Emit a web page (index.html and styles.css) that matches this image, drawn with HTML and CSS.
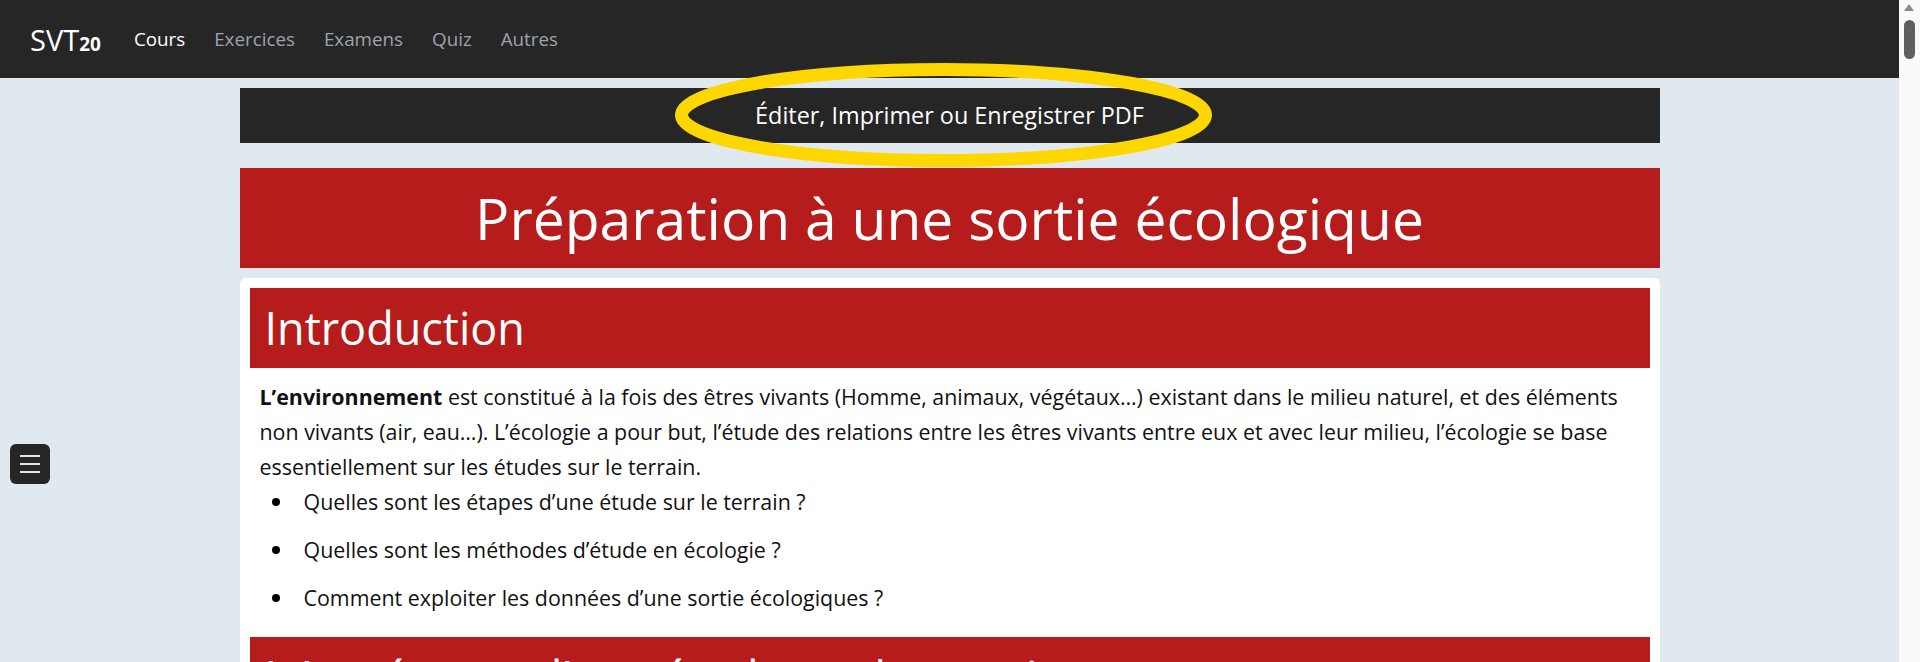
FILE: index.html
```html
<!DOCTYPE html>
<html lang="fr">
<head>
<meta charset="utf-8">
<title>Préparation à une sortie écologique</title>
<link rel="stylesheet" href="styles.css">
</head>
<body>
<div class="viewport">
  <nav class="topbar">
    <a class="brand">SVT<sub>20</sub></a>
    <ul class="navlinks">
      <li><a class="active">Cours</a></li>
      <li><a>Exercices</a></li>
      <li><a>Examens</a></li>
      <li><a>Quiz</a></li>
      <li><a>Autres</a></li>
    </ul>
  </nav>
  <main class="container">
    <div class="editbar">Éditer, Imprimer ou Enregistrer PDF</div>
    <h1 class="title">Préparation à une sortie écologique</h1>
    <section class="card">
      <h2 class="sec-head">Introduction</h2>
      <p class="text"><strong>L’environnement</strong> est constitué à la fois des êtres vivants (Homme, animaux, végétaux…) existant dans le milieu naturel, et des éléments non vivants (air, eau…). L’écologie a pour but, l’étude des relations entre les êtres vivants entre eux et avec leur milieu, l’écologie se base essentiellement sur les études sur le terrain.</p>
      <ul class="bullets">
        <li>Quelles sont les étapes d’une étude sur le terrain ?</li>
        <li>Quelles sont les méthodes d’étude en écologie ?</li>
        <li>Comment exploiter les données d’une sortie écologiques ?</li>
      </ul>
      <h2 class="sec-head">I. Les étapes d’une étude sur le terrain</h2>
    </section>
  </main>
</div>
<button class="menu-btn" aria-label="Menu"><span></span><span></span><span></span></button>
<svg class="annot" width="537" height="104" viewBox="0 0 537 104"><ellipse cx="268.5" cy="52" rx="262" ry="45.5" fill="none" stroke="#ffd700" stroke-width="13"/></svg>
<div class="scrollbar"><span class="arrow"></span><span class="thumb"></span></div>
</body>
</html>
```
FILE: styles.css
```css
html, body {
  margin: 0;
  height: 100%;
  overflow: hidden;
}
body {
  background: #e0e8f0;
  font-family: "Open Sans", "Noto Sans", sans-serif;
  color: #111;
}
.viewport {
  margin-right: 21px;
}
.topbar {
  height: 78px;
  background: #262626;
  display: flex;
  align-items: center;
  padding-left: 30px;
}
.brand {
  color: #fff;
  font-size: 29px;
  line-height: 1;
  margin-right: 33px;
}
.brand sub {
  font-size: 19px;
  font-weight: 700;
  vertical-align: baseline;
}
.navlinks {
  list-style: none;
  margin: 0;
  padding: 0;
  display: flex;
  gap: 29px;
  font-size: 18.8px;
}
.navlinks a {
  color: #9ba4ae;
}
.navlinks a.active {
  color: #fff;
}
.container {
  width: 1420px;
  margin: 0 auto;
}
.editbar {
  margin-top: 10px;
  height: 55px;
  line-height: 55px;
  background: #262626;
  color: #fff;
  text-align: center;
  font-size: 23.4px;
}
.title {
  margin: 25px 0 0;
  height: 100px;
  line-height: 100px;
  background: #b71c1c;
  color: #fff;
  text-align: center;
  font-size: 57px;
  font-weight: 400;
}
.card {
  margin-top: 10px;
  background: #fff;
  border-radius: 6px;
  padding: 10px;
}
.sec-head {
  margin: 0;
  height: 80px;
  line-height: 80px;
  background: #b71c1c;
  color: #fff;
  font-size: 45px;
  font-weight: 400;
  padding-left: 15px;
  white-space: nowrap;
  overflow: hidden;
}
.text {
  margin: 11px 0 0;
  padding: 0 10px;
  font-size: 21.4px;
  line-height: 35px;
}
.bullets {
  list-style: none;
  margin: 0 0 22px;
  padding: 0 10px;
  font-size: 21.4px;
  line-height: 35px;
}
.bullets li {
  display: flex;
  align-items: center;
  margin-bottom: 13px;
}
.bullets li::before {
  content: "";
  width: 8px;
  height: 8px;
  border-radius: 50%;
  background: #000;
  margin-left: 12px;
  margin-right: 24px;
  flex: none;
}
.menu-btn {
  position: fixed;
  left: 10px;
  top: 444px;
  width: 40px;
  height: 40px;
  border: 0;
  border-radius: 6px;
  background: #262626;
  padding: 0;
  display: flex;
  flex-direction: column;
  align-items: center;
  justify-content: center;
  gap: 6px;
}
.menu-btn span {
  display: block;
  width: 20px;
  height: 2px;
  background: #e6e6e6;
}
.annot {
  position: absolute;
  left: 675px;
  top: 63px;
}
.scrollbar {
  position: fixed;
  top: 0;
  right: 0;
  width: 21px;
  height: 100%;
  background: #fafafa;
}
.scrollbar .arrow {
  position: absolute;
  left: 5px;
  top: 4px;
  width: 0;
  height: 0;
  border-left: 5px solid transparent;
  border-right: 5px solid transparent;
  border-bottom: 7px solid #8a8a8a;
}
.scrollbar .thumb {
  position: absolute;
  left: 5px;
  top: 20px;
  width: 11px;
  height: 39px;
  border-radius: 6px;
  background: #5f5f5f;
}
```
